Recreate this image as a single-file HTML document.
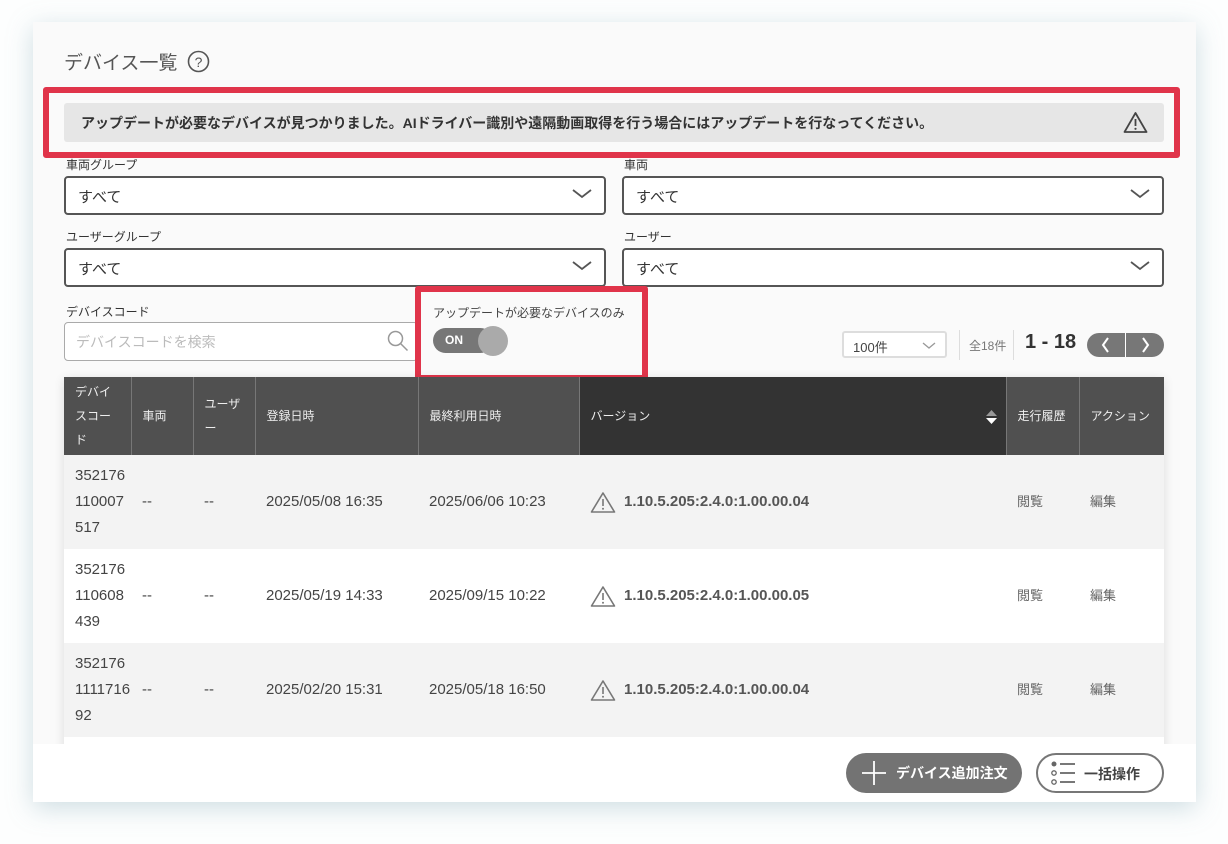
<!DOCTYPE html>
<html><head><meta charset="utf-8"><style>
*{box-sizing:border-box;margin:0;padding:0}
body{width:1228px;height:844px;background:#fdfefe;font-family:"Liberation Sans","Noto Sans CJK JP",sans-serif;position:relative;overflow:hidden;color:#333}
.abs{position:absolute}
.card{left:33px;top:22px;width:1163px;height:780px;background:#fafafa;box-shadow:0 6px 24px rgba(120,160,175,.35);overflow:hidden}
.lbl{font-size:12px;color:#333}
.sel{border:2px solid #555;border-radius:4px;background:#fff;height:39px;font-size:15px;padding:8px 12px;color:#333}
.chev{position:absolute;right:12px;top:10px}
table{border-collapse:collapse;font-size:14px;table-layout:fixed}
th{background:#505050;color:#eee;font-weight:normal;font-size:12px;text-align:left;padding:0 11px;border-right:1px solid #777;height:78px;line-height:24px}
td{padding:0 11px;height:94px;color:#444;line-height:26px;font-size:15px}
tr.g td{background:#f3f3f3}
tr.w td{background:#fff}
.ver{font-weight:bold;font-size:15px;color:#555;display:flex;align-items:center;gap:8px}
.lnk{color:#666;font-size:13px}
</style></head><body>
<div class="abs card"></div>
<div class="abs" style="left:64px;top:48px;font-size:19px;color:#555">デバイス一覧</div>
<svg class="abs" style="left:187px;top:50px" width="23" height="23" viewBox="0 0 23 23"><circle cx="11.5" cy="11.5" r="10" fill="none" stroke="#555" stroke-width="1.6"/><text x="11.5" y="17" text-anchor="middle" font-size="14" fill="#555" font-family="Liberation Sans">?</text></svg>

<div class="abs" style="left:64px;top:103px;width:1100px;height:39px;background:#e6e6e6;border-radius:3px;font-size:14px;font-weight:bold;padding:10px 17px;color:#333;white-space:nowrap">アップデートが必要なデバイスが見つかりました。AIドライバー識別や遠隔動画取得を行う場合にはアップデートを行なってください。</div>
<svg class="abs" style="left:1123px;top:111px" width="25" height="23" viewBox="0 0 25 23"><path d="M12.5 2 L23.5 21 H1.5 Z" fill="none" stroke="#444" stroke-width="1.8" stroke-linejoin="round"/><path d="M12.5 8v7" stroke="#444" stroke-width="1.8"/><circle cx="12.5" cy="17.8" r="1.1" fill="#444"/></svg>
<div class="abs" style="left:43px;top:87px;width:1137px;height:71px;border:6px solid #e0344a;border-radius:3px"></div>

<div class="abs lbl" style="left:66px;top:156px">車両グループ</div>
<div class="abs sel" style="left:64px;top:176px;width:542px">すべて<svg class="chev" width="20" height="12" viewBox="0 0 20 12"><path d="M1 2l9 7 9-7" fill="none" stroke="#555" stroke-width="1.8"/></svg></div>
<div class="abs lbl" style="left:624px;top:156px">車両</div>
<div class="abs sel" style="left:622px;top:176px;width:542px">すべて<svg class="chev" width="20" height="12" viewBox="0 0 20 12"><path d="M1 2l9 7 9-7" fill="none" stroke="#555" stroke-width="1.8"/></svg></div>
<div class="abs lbl" style="left:66px;top:228px">ユーザーグループ</div>
<div class="abs sel" style="left:64px;top:248px;width:542px">すべて<svg class="chev" width="20" height="12" viewBox="0 0 20 12"><path d="M1 2l9 7 9-7" fill="none" stroke="#555" stroke-width="1.8"/></svg></div>
<div class="abs lbl" style="left:624px;top:228px">ユーザー</div>
<div class="abs sel" style="left:622px;top:248px;width:542px">すべて<svg class="chev" width="20" height="12" viewBox="0 0 20 12"><path d="M1 2l9 7 9-7" fill="none" stroke="#555" stroke-width="1.8"/></svg></div>

<div class="abs lbl" style="left:66px;top:303px">デバイスコード</div>
<div class="abs" style="left:64px;top:322px;width:354px;height:39px;border:1.5px solid #aaa;border-radius:4px;background:#fff;font-size:14px;color:#bbb;padding:9px 11px">デバイスコードを検索</div>
<svg class="abs" style="left:386px;top:329px" width="24" height="24" viewBox="0 0 24 24"><circle cx="9.5" cy="9.5" r="7" fill="none" stroke="#999" stroke-width="1.5"/><path d="M14.5 14.5l7 7" stroke="#999" stroke-width="1.5"/></svg>

<div class="abs" style="left:415px;top:286px;width:233px;height:95px;border:6px solid #e0344a;border-radius:3px;background:#fafafa"></div>
<div class="abs" style="left:433px;top:304px;font-size:12px;color:#444">アップデートが必要なデバイスのみ</div>
<div class="abs" style="left:433px;top:328px;width:60px;height:25px;border-radius:13px;background:#777;color:#fff;font-size:12px;font-weight:bold;padding:5px 0 0 12px">ON</div>
<div class="abs" style="left:478px;top:326px;width:30px;height:30px;border-radius:50%;background:#aaa"></div>

<div class="abs" style="left:842px;top:331px;width:105px;height:27px;border:2px solid #ddd;border-radius:3px;background:#fff;font-size:13px;color:#444;padding:4px 9px">100件<svg style="position:absolute;right:9px;top:9px" width="14" height="8" viewBox="0 0 14 8"><path d="M1 1l6 5 6-5" fill="none" stroke="#999" stroke-width="1.3"/></svg></div>
<div class="abs" style="left:959px;top:330px;width:1px;height:30px;background:#ddd"></div>
<div class="abs" style="left:969px;top:337px;font-size:12px;color:#777">全18件</div>
<div class="abs" style="left:1013px;top:330px;width:1px;height:30px;background:#ddd"></div>
<div class="abs" style="left:1025px;top:331px;font-size:20px;font-weight:bold;color:#333">1 - 18</div>
<div class="abs" style="left:1087px;top:333px;width:77px;height:24px;border-radius:12px;background:#777"></div>
<div class="abs" style="left:1125px;top:333px;width:1px;height:24px;background:#fff"></div>
<svg class="abs" style="left:1100px;top:337px" width="12" height="16" viewBox="0 0 12 16"><path d="M8 1L3 8l5 7" fill="none" stroke="#fff" stroke-width="2"/></svg>
<svg class="abs" style="left:1139px;top:337px" width="12" height="16" viewBox="0 0 12 16"><path d="M4 1l5 7-5 7" fill="none" stroke="#fff" stroke-width="2"/></svg>

<div class="abs" style="left:64px;top:377px;width:1100px;height:380px;box-shadow:0 2px 10px rgba(0,0,0,.12);overflow:hidden">
<table style="width:1100px">
<colgroup><col style="width:67px"><col style="width:62px"><col style="width:62px"><col style="width:163px"><col style="width:161px"><col style="width:427px"><col style="width:73px"><col style="width:85px"></colgroup>
<tr><th>デバイ<br>スコー<br>ド</th><th>車両</th><th>ユーザ<br>ー</th><th>登録日時</th><th>最終利用日時</th><th style="background:#333;position:relative">バージョン<svg style="position:absolute;right:9px;top:33px" width="11" height="14" viewBox="0 0 11 14"><path d="M5.5 0L11 6H0Z" fill="#999"/><path d="M0 8h11L5.5 14Z" fill="#fff"/></svg></th><th>走行履歴</th><th style="border-right:none">アクション</th></tr>
<tr class="g"><td>352176<br>110007<br>517</td><td>--</td><td>--</td><td>2025/05/08 16:35</td><td>2025/06/06 10:23</td><td><div class="ver"><svg width="26" height="23" viewBox="0 0 26 23"><path d="M13 2L24.5 21h-23Z" fill="none" stroke="#777" stroke-width="1.6" stroke-linejoin="round"/><path d="M13 8v7" stroke="#777" stroke-width="1.6"/><circle cx="13" cy="17.8" r="1" fill="#777"/></svg>1.10.5.205:2.4.0:1.00.00.04</div></td><td class="lnk">閲覧</td><td class="lnk">編集</td></tr>
<tr class="w"><td>352176<br>110608<br>439</td><td>--</td><td>--</td><td>2025/05/19 14:33</td><td>2025/09/15 10:22</td><td><div class="ver"><svg width="26" height="23" viewBox="0 0 26 23"><path d="M13 2L24.5 21h-23Z" fill="none" stroke="#777" stroke-width="1.6" stroke-linejoin="round"/><path d="M13 8v7" stroke="#777" stroke-width="1.6"/><circle cx="13" cy="17.8" r="1" fill="#777"/></svg>1.10.5.205:2.4.0:1.00.00.05</div></td><td class="lnk">閲覧</td><td class="lnk">編集</td></tr>
<tr class="g"><td>352176<br>1111716<br>92</td><td>--</td><td>--</td><td>2025/02/20 15:31</td><td>2025/05/18 16:50</td><td><div class="ver"><svg width="26" height="23" viewBox="0 0 26 23"><path d="M13 2L24.5 21h-23Z" fill="none" stroke="#777" stroke-width="1.6" stroke-linejoin="round"/><path d="M13 8v7" stroke="#777" stroke-width="1.6"/><circle cx="13" cy="17.8" r="1" fill="#777"/></svg>1.10.5.205:2.4.0:1.00.00.04</div></td><td class="lnk">閲覧</td><td class="lnk">編集</td></tr>
<tr class="w"><td>&nbsp;</td><td></td><td></td><td></td><td></td><td></td><td></td><td></td></tr>
</table></div>

<div class="abs" style="left:33px;top:744px;width:1163px;height:58px;background:#fff"></div>
<div class="abs" style="left:846px;top:753px;width:176px;height:40px;border-radius:20px;background:#737373;color:#fff;font-size:14px;font-weight:bold;padding:10px 0 0 50px">デバイス追加注文</div>
<svg class="abs" style="left:861px;top:760px" width="26" height="26" viewBox="0 0 26 26"><path d="M13 1v24M1 13h24" stroke="#fff" stroke-width="1.8"/></svg>
<div class="abs" style="left:1036px;top:753px;width:128px;height:40px;border-radius:20px;border:2px solid #777;background:#fff;color:#444;font-size:14px;font-weight:bold;padding:9px 0 0 46px">一括操作</div>
<svg class="abs" style="left:1050px;top:761px" width="28" height="24" viewBox="0 0 28 24"><circle cx="4" cy="3" r="2.5" fill="#666"/><circle cx="4" cy="12" r="2.2" fill="none" stroke="#666" stroke-width="1.3"/><circle cx="4" cy="21" r="2.2" fill="none" stroke="#666" stroke-width="1.3"/><path d="M10 3h15M10 12h15M10 21h15" stroke="#666" stroke-width="1.8"/></svg>
</body></html>
